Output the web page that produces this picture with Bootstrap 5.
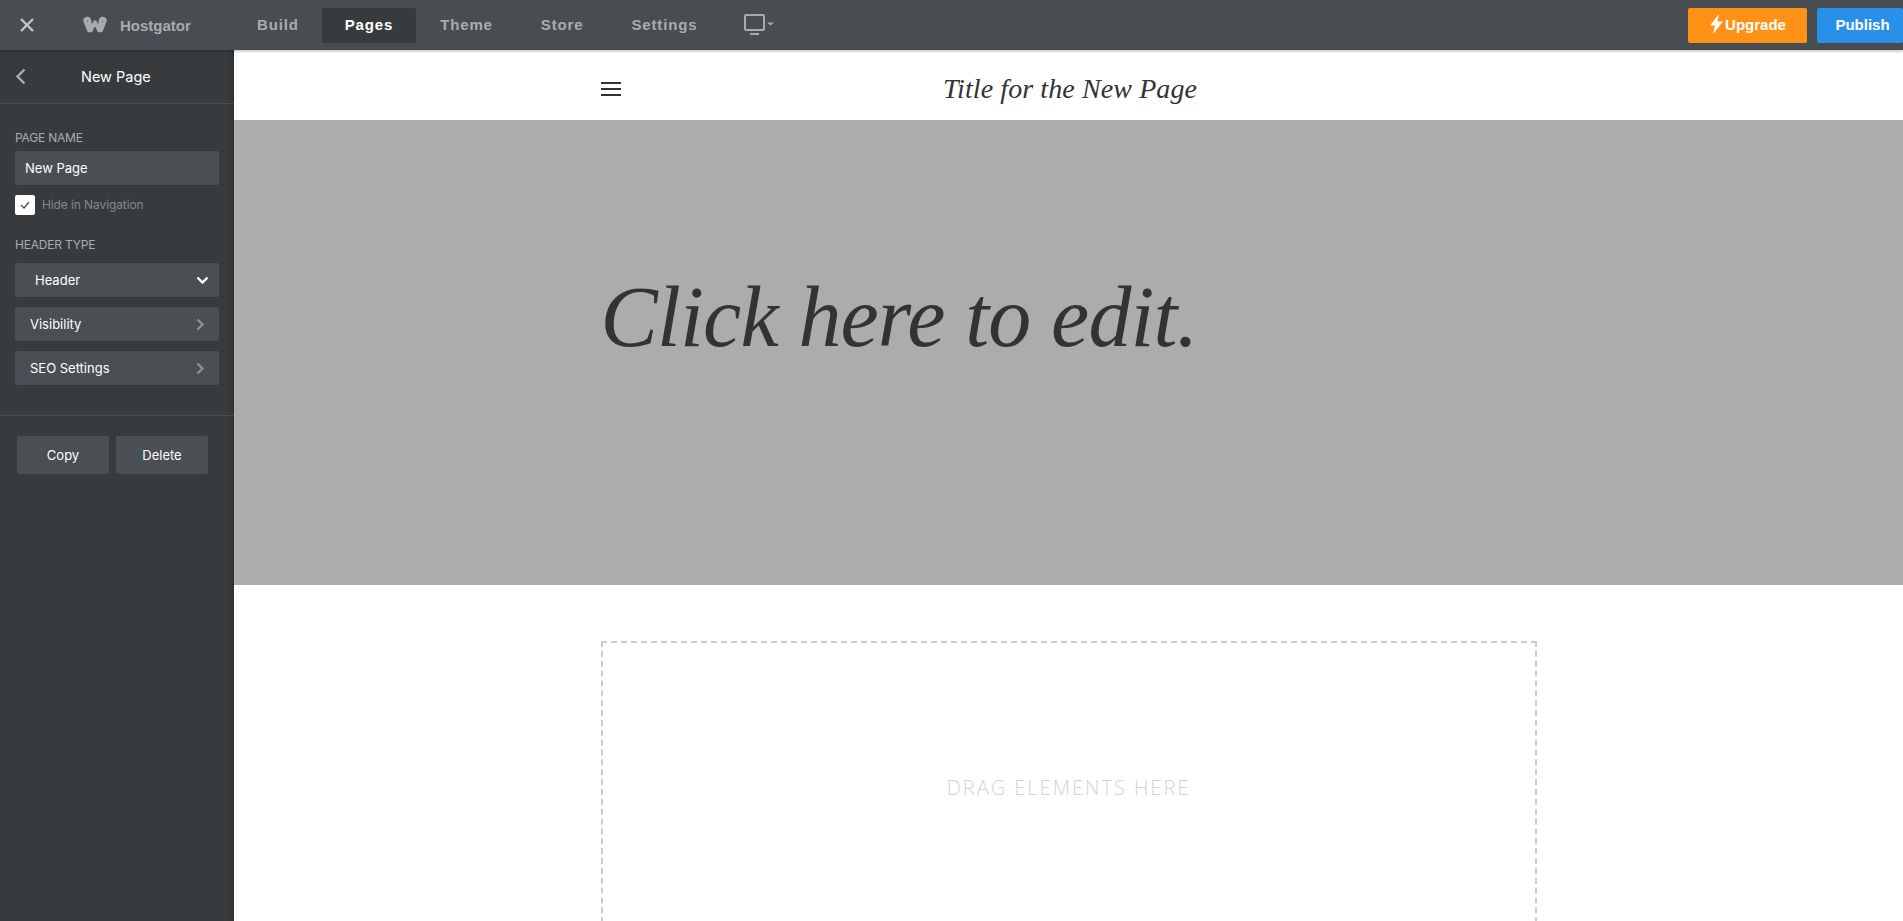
<!DOCTYPE html>
<html lang="en">
<head>
  <meta charset="UTF-8">
  <meta name="viewport" content="width=device-width, initial-scale=1">
  <title>Hostgator - New Page</title>
  <link href="https://cdn.jsdelivr.net/npm/bootstrap@5.3.3/dist/css/bootstrap.min.css" rel="stylesheet">
  <style>
    html, body { height: 100%; }
    body { overflow: hidden; background: #fff; font-family: "Inter", "Liberation Sans", sans-serif; }

    .top-bar { height: 50px; background: #484d51; position: relative; z-index: 3; box-shadow: 0 1px 3px rgba(0,0,0,.3); }
    .close-cell { width: 82px; padding-left: 19px; }
    .brand-cell { width: 152px; gap: 12px; color: #a9acaf; font: 700 15px "Liberation Sans", sans-serif; }
    .main-tab { height: 35px; padding: 0 23px 2px; border-radius: 2px; color: #a9acaf; font: 700 15px "Liberation Sans", sans-serif; letter-spacing: .85px; text-decoration: none; display: flex; align-items: center; }
    .main-tab.active-tab { background: #373b3e; color: #fff; }
    .active-tab ~ .main-tab { padding: 0 24px 2px; }
    .screen-pick { margin-left: 23px; }
    .action-btn { height: 35px; border-radius: 2px; color: #fff; border: 0; font: 700 15px "Liberation Sans", sans-serif; display: flex; align-items: center; justify-content: center; padding: 0 0 2px; }
    .upgrade-btn { width: 119px; background: #ff9216; margin-right: 10px; gap: 1px; }
    .publish-btn { width: 86px; background: #2990ea; padding-left: 5px; }

    .work-area { height: 871px; }
    .side-panel { width: 234px; flex: none; background: #373b3e; color: #fff; box-shadow: inset -6px 0 6px -6px rgba(0,0,0,.35); font-size: 13px; position: relative; z-index: 2; }
    .panel-head { height: 54px; border-bottom: 1px solid #4a4e51; padding-left: 15px; }
    .panel-head span { margin-left: 55px; font-size: 14.5px; letter-spacing: 0; }
    .panel-body { padding: 25px 15px 0; height: 312px; border-bottom: 1px solid #4a4e51; }
    .field-label { font-size: 12px; line-height: 16px; padding-top: 1px; height: 17px; color: #a9acaf; letter-spacing: -.2px; margin-bottom: 5px; }
    .field-label.wide-gap { margin-bottom: 10px; }
    .field-box { height: 34px; width: 204px; background: #4a4f53; border-radius: 2px; color: #fff; font-size: 13px; display: flex; align-items: center; padding-top: 1px; }
    .name-box { padding-left: 10px; }
    .check-row { margin: 10px 0 21px; gap: 7px; color: #85898c; font-size: 12px; height: 20px; letter-spacing: -.1px; }
    .check-square { width: 20px; height: 20px; background: #fff; border-radius: 2px; }
    .type-box { padding-left: 20px; padding-right: 10px; margin-bottom: 10px; }
    .plain-box { padding-left: 15px; padding-right: 14px; margin-bottom: 10px; }
    .panel-actions { padding: 20px 17px; gap: 7px; }
    .panel-btn { width: 92px; height: 38px; background: #4a4f53; border: 0; border-radius: 2px; color: #fff; font-size: 13px; padding: 2px 0 0; }

    .canvas-area { min-width: 0; overflow: hidden; }
    .page-width { width: 936px; margin: 0 auto; }
    .site-head { height: 70px; padding-top: 8px; }
    .site-head .page-width { display: grid; grid-template-columns: 1fr auto 1fr; align-items: center; }
    .burger { width: 20px; }
    .burger i { display: block; height: 2px; background: #333; margin: 4px 0; }
    .site-title { font: italic 28px "Liberation Serif", serif; color: #333; letter-spacing: .1px; margin: 0 0 0 3px; }
    .hero-band { height: 465px; background: #acacac; padding-top: 146px; }
    .hero-text { font: italic 400 86px/1.2 "Liberation Serif", serif; letter-spacing: -.85px; color: #333; margin: 0; }
    .drop-zone { margin-top: 56px; height: 292px; border: 2px dashed #ccc; display: flex; align-items: center; justify-content: center; font: 300 20px "Open Sans", sans-serif; letter-spacing: 2px; color: #d4d4d4; }
  </style>
</head>
<body>

<nav class="top-bar d-flex align-items-center">
  <div class="close-cell d-flex align-items-center">
    <svg width="16" height="16" viewBox="0 0 16 16"><path d="M2 2l12 12M14 2L2 14" stroke="#c4c6c8" stroke-width="2.4" fill="none"/></svg>
  </div>
  <div class="brand-cell d-flex align-items-center">
    <svg width="26" height="20" viewBox="0 0 26 20"><path d="M3 5.500C4 2.500 7 3 7.500 5.500L9 15.500L13 7L17 15.500L18.500 5.500C19 3 22 2.500 23 5.500L19 15.500M3 5.500L7 15.500" stroke="#a9acaf" stroke-width="3.600" fill="none" stroke-linecap="round" stroke-linejoin="round"/></svg>
    <span>Hostgator</span>
  </div>
  <a class="main-tab" href="#">Build</a>
  <a class="main-tab active-tab" href="#">Pages</a>
  <a class="main-tab" href="#">Theme</a>
  <a class="main-tab" href="#">Store</a>
  <a class="main-tab" href="#">Settings</a>
  <div class="screen-pick d-flex">
    <svg width="32" height="22" viewBox="0 0 32 22"><rect x="1" y="1" width="19" height="15" rx="1" fill="none" stroke="#a9acaf" stroke-width="2"/><path d="M6 20h9" stroke="#a9acaf" stroke-width="2"/><path d="M23 8.500h7l-3.500 3z" fill="#a9acaf"/></svg>
  </div>
  <div class="ms-auto d-flex">
    <button class="action-btn upgrade-btn"><svg width="15" height="20" viewBox="0 0 15 20"><path d="M10 0L1 11.500h5L4 20l10-12.500H8.500z" fill="#fff"/></svg>Upgrade</button>
    <button class="action-btn publish-btn">Publish</button>
  </div>
</nav>

<div class="work-area d-flex">
  <aside class="side-panel">
    <div class="panel-head d-flex align-items-center">
      <svg width="11" height="18" viewBox="0 0 11 18"><path d="M9.500 1.500L2.500 8.500L9.500 15.500" stroke="#a9acaf" stroke-width="2.400" fill="none"/></svg>
      <span>New Page</span>
    </div>
    <div class="panel-body">
      <div class="field-label">PAGE NAME</div>
      <div class="field-box name-box">New Page</div>
      <div class="check-row d-flex align-items-center">
        <span class="check-square d-flex align-items-center justify-content-center">
          <svg width="10" height="8" viewBox="0 0 10 8"><path d="M1 4l3 3 5-6" stroke="#4a4f53" stroke-width="1.300" fill="none"/></svg>
        </span>
        Hide in Navigation
      </div>
      <div class="field-label wide-gap">HEADER TYPE</div>
      <div class="field-box type-box justify-content-between">
        Header
        <svg width="13" height="9" viewBox="0 0 13 9"><path d="M1.500 1.500L6.500 6.500L11.500 1.500" stroke="#fff" stroke-width="2.400" fill="none"/></svg>
      </div>
      <div class="field-box plain-box justify-content-between">
        Visibility
        <svg width="9" height="13" viewBox="0 0 9 13"><path d="M1.500 1.500L6.500 6.500L1.500 11.500" stroke="#8d9093" stroke-width="2.400" fill="none"/></svg>
      </div>
      <div class="field-box plain-box justify-content-between">
        SEO Settings
        <svg width="9" height="13" viewBox="0 0 9 13"><path d="M1.500 1.500L6.500 6.500L1.500 11.500" stroke="#8d9093" stroke-width="2.400" fill="none"/></svg>
      </div>
    </div>
    <div class="panel-actions d-flex">
      <button class="panel-btn">Copy</button>
      <button class="panel-btn">Delete</button>
    </div>
  </aside>

  <main class="canvas-area flex-grow-1">
    <header class="site-head d-flex align-items-center">
      <div class="page-width">
        <div class="burger"><i></i><i></i><i></i></div>
        <h1 class="site-title">Title for the New Page</h1>
      </div>
    </header>
    <section class="hero-band">
      <div class="page-width">
        <h2 class="hero-text">Click here to edit.</h2>
      </div>
    </section>
    <div class="page-width">
      <div class="drop-zone">DRAG ELEMENTS HERE</div>
    </div>
  </main>
</div>

<script src="https://cdn.jsdelivr.net/npm/bootstrap@5.3.3/dist/js/bootstrap.bundle.min.js"></script>
</body>
</html>
